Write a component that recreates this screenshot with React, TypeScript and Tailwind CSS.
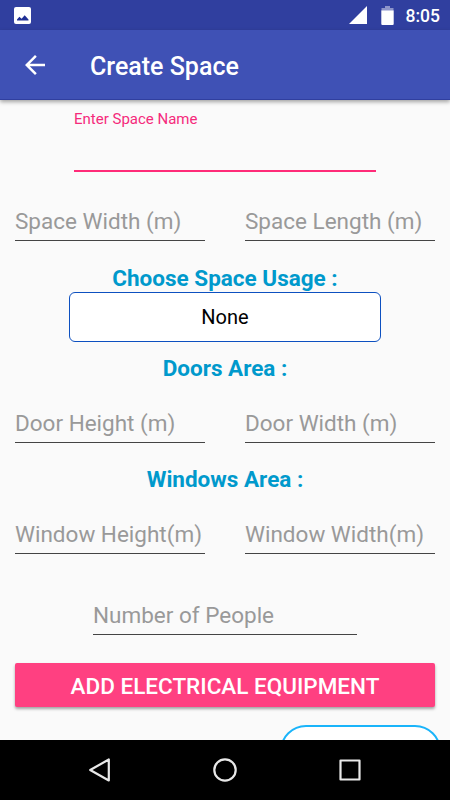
import type { ReactNode } from 'react'

function StatusBar() {
  return (
    <div className="flex h-[30px] shrink-0 items-center bg-[#303f9f] pr-[10px] pl-[14px] text-white">
      <svg className="h-[17px] w-[17px]" viewBox="0 0 17 17">
        <rect width="17" height="17" rx="2" fill="#fff" />
        <path d="M3 13.5v-1.1l2.4-2.6 2.2 2 3.1-3.6 3.8 4.3v1z" fill="#1f2f95" />
      </svg>
      <svg className="ml-auto h-[18px] w-[18px]" viewBox="0 0 18 18">
        <path d="M18 0v18H0z" fill="#fff" />
      </svg>
      <svg className="ml-[14px] h-[19px] w-[13px]" viewBox="0 0 13 19">
        <path d="M4 0h5v2h3.5v3H.5V2H4z" fill="#fff" opacity=".45" />
        <path d="M.3 4.5h12.4V18a1 1 0 0 1-1 1H1.3a1 1 0 0 1-1-1z" fill="#fff" />
      </svg>
      <span className="mt-px ml-[12px] text-[17.5px] leading-5 font-medium">8:05</span>
    </div>
  )
}

function Toolbar() {
  return (
    <header className="z-10 flex h-[70px] shrink-0 items-center border-b border-[#303f9f] bg-[#3f51b5] pl-5 text-white shadow-[0_2px_4px_rgba(0,0,0,0.35)]">
      <svg className="h-[30px] w-[30px]" viewBox="0 0 24 24" fill="currentColor">
        <path d="M20 11H7.83l5.59-5.59L12 4l-8 8 8 8 1.41-1.41L7.83 13H20v-2z" />
      </svg>
      <h1 className="mt-[5px] ml-10 text-[25px] leading-[30px] font-medium">Create Space</h1>
    </header>
  )
}

function Field({ hint, className = '' }: { hint: string; className?: string }) {
  return (
    <div className={`h-[37px] border-b border-[#444] text-[22.5px] leading-[34px] whitespace-nowrap text-[#999] ${className}`}>
      {hint}
    </div>
  )
}

function Heading({ children }: { children: ReactNode }) {
  return <h2 className="h-[27px] text-center text-[22.5px] leading-[26px] font-bold text-[#0099cc]">{children}</h2>
}

function FieldRow({ children }: { children: ReactNode }) {
  return <div className="grid grid-cols-2 gap-10 px-[15px]">{children}</div>
}

function NavBar() {
  return (
    <nav className="flex h-[60px] shrink-0 items-center justify-center gap-[101px] bg-black">
      <svg className="h-6 w-6" viewBox="0 0 24 24" fill="none" stroke="#e8e8e8" strokeWidth="2.2" strokeLinejoin="round">
        <path d="M20.8 1.5v21L2.2 12z" />
      </svg>
      <svg className="h-6 w-6" viewBox="0 0 24 24" fill="none" stroke="#e8e8e8" strokeWidth="2.2">
        <circle cx="12" cy="12" r="10.7" />
      </svg>
      <svg className="h-6 w-6" viewBox="0 0 24 24" fill="none" stroke="#e8e8e8" strokeWidth="2.2" strokeLinejoin="round">
        <rect x="2.5" y="2.5" width="19" height="19" />
      </svg>
    </nav>
  )
}

function App() {
  return (
    <div className="flex h-[800px] w-[450px] flex-col overflow-hidden bg-[#fafafa] font-[Roboto,sans-serif]">
      <StatusBar />
      <Toolbar />
      <main className="flex min-h-0 flex-1 flex-col overflow-hidden">
        <div className="mx-[74px] mt-[9px] h-[63px] shrink-0 border-b-2 border-[#ff2b78] text-[15px] leading-[20px] text-[#f52a7c]">
          Enter Space Name
        </div>

        <div className="mt-8 shrink-0">
          <FieldRow>
            <Field hint="Space Width (m)" />
            <Field hint="Space Length (m)" />
          </FieldRow>
        </div>

        <div className="mt-6 shrink-0">
          <Heading>Choose Space Usage :</Heading>
          <div className="mx-[69px] h-[50px] rounded-[6px] border border-[#0d50c0] bg-white text-center text-[20px] leading-[49px] text-black">
            None
          </div>
        </div>

        <div className="mt-[13px] shrink-0">
          <Heading>Doors Area :</Heading>
          <div className="h-6" />
          <FieldRow>
            <Field hint="Door Height (m)" />
            <Field hint="Door Width (m)" />
          </FieldRow>
        </div>

        <div className="mt-[23px] shrink-0">
          <Heading>Windows Area :</Heading>
          <div className="h-6" />
          <FieldRow>
            <Field hint="Window Height(m)" />
            <Field hint="Window Width(m)" />
          </FieldRow>
        </div>

        <Field hint="Number of People" className="mt-11 ml-[93px] w-[264px] shrink-0" />

        <button className="mx-[15px] mt-[28px] h-[44px] shrink-0 rounded-[2px] bg-[#ff4081] text-[22.5px] leading-[46px] font-medium text-white shadow-[0_2px_3px_rgba(0,0,0,0.35)]">
          ADD ELECTRICAL EQUIPMENT
        </button>

        <div className="mt-[18px] mr-[9px] h-[60px] w-[161px] shrink-0 self-end rounded-[26px] border-2 border-[#1ab4fa] bg-white" />
      </main>
      <NavBar />
    </div>
  )
}

export default App
